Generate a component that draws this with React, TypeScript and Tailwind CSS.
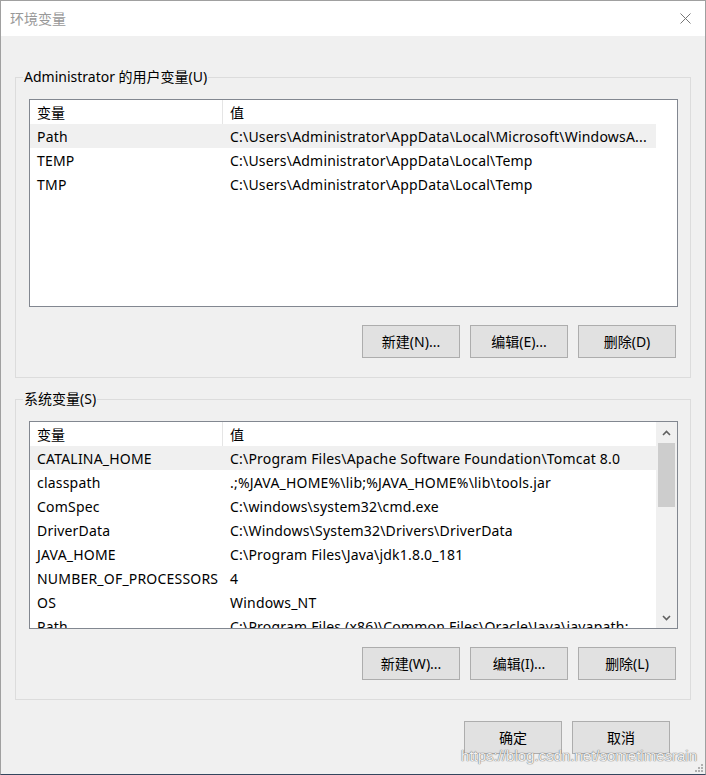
import React from 'react';

type EnvVar = { name: string; value: string };

const userVars: EnvVar[] = [
  { name: 'Path', value: 'C:\\Users\\Administrator\\AppData\\Local\\Microsoft\\WindowsA...' },
  { name: 'TEMP', value: 'C:\\Users\\Administrator\\AppData\\Local\\Temp' },
  { name: 'TMP', value: 'C:\\Users\\Administrator\\AppData\\Local\\Temp' },
];

const systemVars: EnvVar[] = [
  { name: 'CATALINA_HOME', value: 'C:\\Program Files\\Apache Software Foundation\\Tomcat 8.0' },
  { name: 'classpath', value: '.;%JAVA_HOME%\\lib;%JAVA_HOME%\\lib\\tools.jar' },
  { name: 'ComSpec', value: 'C:\\windows\\system32\\cmd.exe' },
  { name: 'DriverData', value: 'C:\\Windows\\System32\\Drivers\\DriverData' },
  { name: 'JAVA_HOME', value: 'C:\\Program Files\\Java\\jdk1.8.0_181' },
  { name: 'NUMBER_OF_PROCESSORS', value: '4' },
  { name: 'OS', value: 'Windows_NT' },
  { name: 'Path', value: 'C:\\Program Files (x86)\\Common Files\\Oracle\\Java\\javapath;C:\\...' },
];

const Chevron = ({ down = false }: { down?: boolean }) => (
  <svg width="9" height="6" viewBox="0 0 9 6" className={down ? 'rotate-180' : ''}>
    <path d="M1 5 L4.5 1.5 L8 5" fill="none" stroke="#606060" strokeWidth="1.6" />
  </svg>
);

const Button = ({ label }: { label: string }) => (
  <button
    type="button"
    className="w-[98px] h-[33px] bg-[#e1e1e1] border border-[#adadad] text-[14px] text-black flex items-center justify-center"
  >
    {label}
  </button>
);

const VarList = ({ rows, scroll }: { rows: EnvVar[]; scroll?: boolean }) => (
  <div className="mt-[12px] h-[208px] min-w-0 border border-[#828790] bg-white flex overflow-hidden">
    <div className="flex-1 min-w-0">
      <div className="flex h-[24px] items-center">
        <div className="w-[193px] h-full pl-[7px] flex items-center border-r border-[#e5e5e5]">变量</div>
        <div className="flex-1 pl-[7px]">值</div>
      </div>
      {rows.map((r, i) => (
        <div
          key={r.name + i}
          className={`flex h-[24px] items-center pt-[1px] tracking-[0.2px] ${i === 0 ? 'bg-[#f0f0f0]' : ''}`}
        >
          <div className="w-[193px] shrink-0 pl-[7px] whitespace-nowrap overflow-hidden">{r.name}</div>
          <div className="flex-1 min-w-0 pl-[7px] pr-[8px] truncate">{r.value}</div>
        </div>
      ))}
    </div>
    {scroll ? (
      <div className="w-[21px] shrink-0 bg-[#f0f0f0] flex flex-col">
        <div className="h-[21px] flex items-center justify-center">
          <Chevron />
        </div>
        <div className="mx-[2px] h-[64px] bg-[#cdcdcd]" />
        <div className="flex-1" />
        <div className="h-[21px] flex items-center justify-center">
          <Chevron down />
        </div>
      </div>
    ) : (
      <div className="w-[21px] shrink-0" />
    )}
  </div>
);

const Group = ({
  title,
  rows,
  labels,
  scroll,
  className = '',
}: {
  title: string;
  rows: EnvVar[];
  labels: string[];
  scroll?: boolean;
  className?: string;
}) => (
  <fieldset className={`min-w-0 border border-[#dcdcdc] pl-[13px] pr-[12px] pb-[19px] ${className}`}>
    <legend className="-ml-[6px] px-[1px] leading-[20px]">{title}</legend>
    <VarList rows={rows} scroll={scroll} />
    <div className="mt-[18px] flex justify-end gap-[10px] pr-[2px]">
      {labels.map((l) => (
        <Button key={l} label={l} />
      ))}
    </div>
  </fieldset>
);

export default function App() {
  return (
    <div
      className="relative w-[706px] h-[775px] bg-[#f0f0f0] border border-[#a0a0a0] border-b-[#34465e] flex flex-col text-[14px] text-black"
      style={{ fontFamily: '"Noto Sans", "Noto Sans CJK SC", sans-serif' }}
    >
      <div className="h-[35px] bg-white flex items-center justify-between pl-[9px] pr-[14px] shrink-0">
        <span className="text-[14px] text-[#999999]">环境变量</span>
        <svg width="11" height="11" viewBox="0 0 11 11">
          <path d="M0.5 0.5 L10.5 10.5 M10.5 0.5 L0.5 10.5" stroke="#777777" strokeWidth="1" />
        </svg>
      </div>

      <div className="px-[14px] w-full min-w-0">
        <Group
          className="mt-[31px]"
          title="Administrator 的用户变量(U)"
          rows={userVars}
          labels={['新建(N)...', '编辑(E)...', '删除(D)']}
        />
        <Group
          className="mt-[11px]"
          title="系统变量(S)"
          rows={systemVars}
          scroll
          labels={['新建(W)...', '编辑(I)...', '删除(L)']}
        />
      </div>

      <div className="mt-[21px] flex justify-end gap-[10px] pr-[35px]">
        <Button label="确定" />
        <Button label="取消" />
      </div>

      <div
        className="absolute right-[8px] bottom-[9px] text-[15px] leading-[18px] text-white/90 [text-shadow:0_0_1px_#666,0_0_1px_#666] pointer-events-none whitespace-nowrap"
        style={{ fontFamily: '"Liberation Sans", sans-serif' }}
      >
        https://blog.csdn.net/sometimesrain
      </div>
      <svg className="absolute right-[2px] bottom-[2px]" width="9" height="9" viewBox="0 0 9 9">
        <g fill="#b0b0b0">
          <rect x="7" y="1" width="2" height="2" />
          <rect x="4" y="4" width="2" height="2" />
          <rect x="7" y="4" width="2" height="2" />
          <rect x="1" y="7" width="2" height="2" />
          <rect x="4" y="7" width="2" height="2" />
          <rect x="7" y="7" width="2" height="2" />
        </g>
      </svg>
    </div>
  );
}
